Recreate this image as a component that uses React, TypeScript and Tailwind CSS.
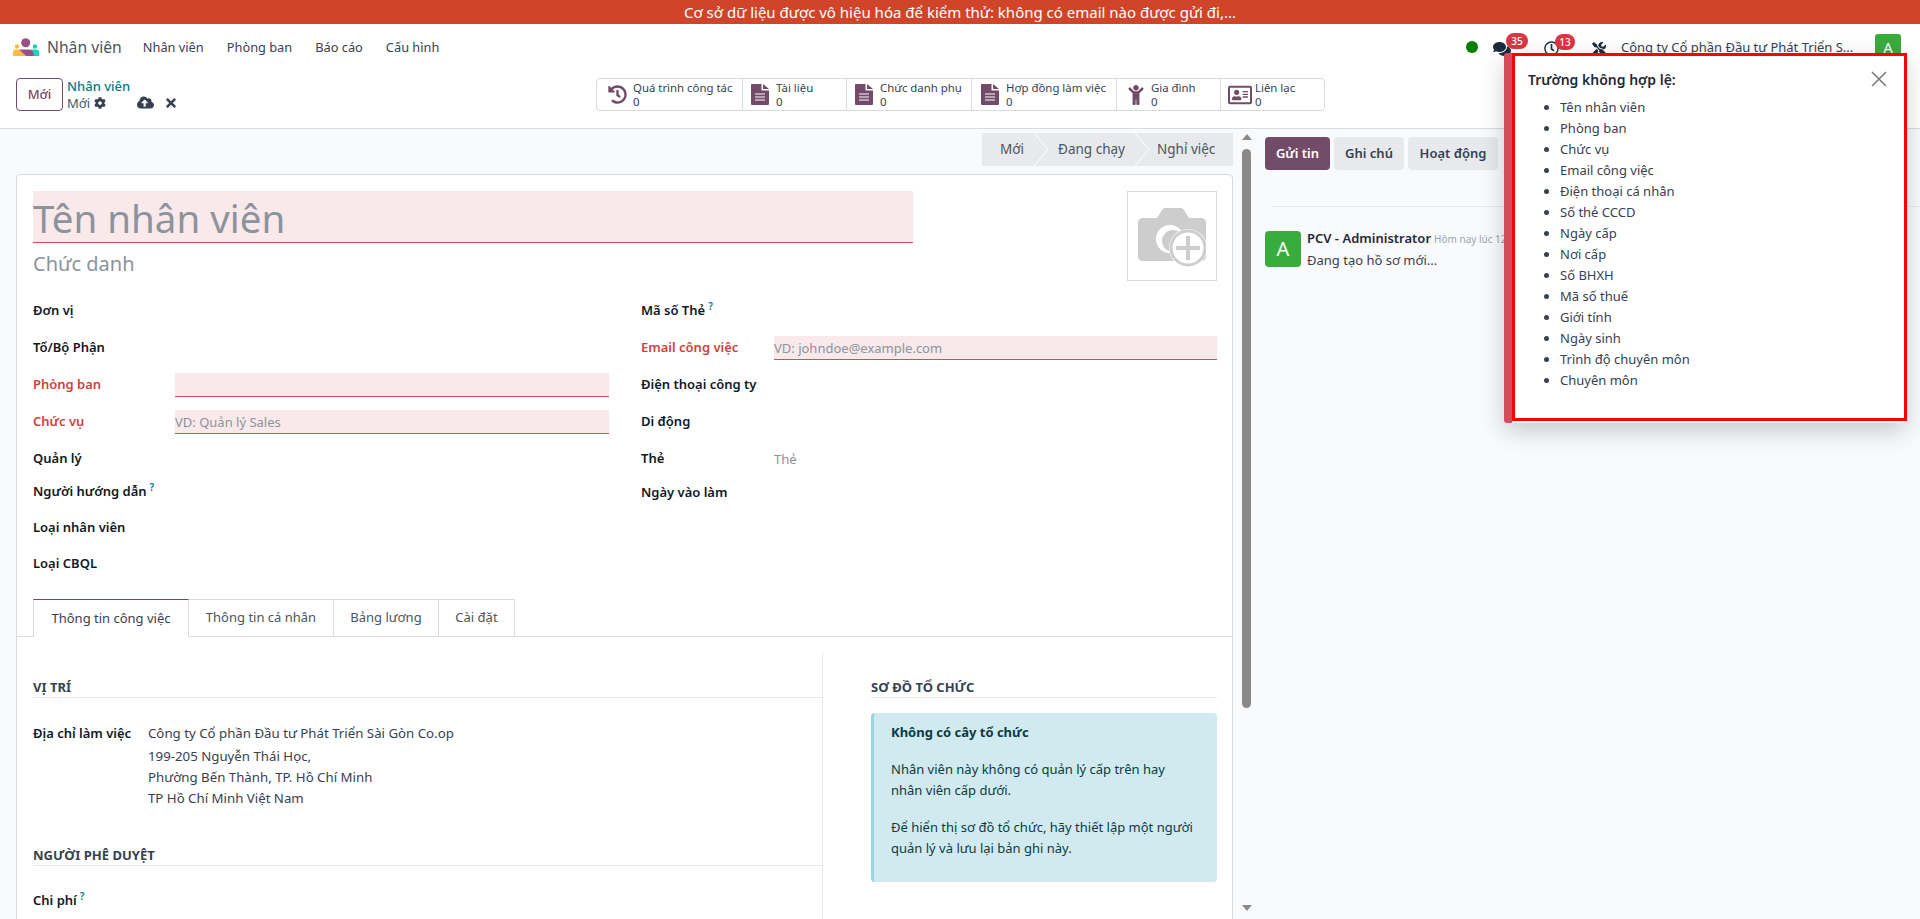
import {
  FaChild,
  FaCloudUploadAlt,
  FaCog,
  FaComments,
  FaHistory,
  FaRegAddressCard,
  FaRegClock,
  FaTimes,
  FaTools,
} from "react-icons/fa";

const invalidFields = [
  "Tên nhân viên",
  "Phòng ban",
  "Chức vụ",
  "Email công việc",
  "Điện thoại cá nhân",
  "Số thẻ CCCD",
  "Ngày cấp",
  "Nơi cấp",
  "Số BHXH",
  "Mã số thuế",
  "Giới tính",
  "Ngày sinh",
  "Trình độ chuyên môn",
  "Chuyên môn",
];

function HrLogo() {
  return (
    <svg width="26" height="18" viewBox="0 0 26 18">
      <circle cx="4" cy="8.500" r="2.200" fill="#fbb945" />
      <circle cx="22" cy="8.500" r="2.200" fill="#1ad3bb" />
      <path d="M0 18v-4q0-2.500 2.500-2.500H6L13 18z" fill="#fbb945" />
      <path d="M26 18v-4q0-2.500-2.500-2.500H18v6.500z" fill="#1ad3bb" />
      <path d="M6 11.500h10q3 0 4 3l1.500 3.500H13z" fill="#985184" />
      <circle cx="12.700" cy="4.700" r="4.500" fill="#985184" />
    </svg>
  );
}

function DocIcon() {
  return (
    <svg width="18" height="21" viewBox="0 0 18 21" className="shrink-0">
      <path d="M0 1q0-1 1-1h9.500v6.500H18V20q0 1-1 1H1q-1 0-1-1z" fill="#714b67" />
      <path d="M12 0l6 5h-6z" fill="#714b67" />
      <path d="M4 10h10M4 13h10M4 16h10" stroke="#fff" strokeWidth="1.200" />
    </svg>
  );
}

function CameraPlus() {
  return (
    <svg width="68" height="60" viewBox="0 0 68 60">
      <path
        d="M5 11h14l5-8q1-2 3-2h16q2 0 3 2l5 8h12q5 0 5 5v33q0 5-5 5H5q-5 0-5-5V16q0-5 5-5z"
        fill="#cdcdcd"
      />
      <circle cx="32" cy="32" r="14" fill="#fff" />
      <circle cx="35" cy="34" r="11" fill="#cdcdcd" />
      <circle cx="50" cy="41" r="19" fill="#fff" />
      <circle cx="50" cy="41" r="17" fill="#fff" stroke="#cdcdcd" strokeWidth="3" />
      <rect x="48" y="29" width="4" height="24" fill="#cdcdcd" />
      <rect x="38" y="39" width="24" height="4" fill="#cdcdcd" />
    </svg>
  );
}

function StatButton({
  icon,
  label,
  className,
}: {
  icon: React.ReactNode;
  label: string;
  className: string;
}) {
  return (
    <div className={`flex h-full items-center border-r border-[#d8dadd] last:border-r-0 ${className}`}>
      {icon}
      <div className="text-[11.400px] leading-[14px] text-[#374151]">
        <div className="whitespace-nowrap">{label}</div>
        <div>0</div>
      </div>
    </div>
  );
}

function Chevron() {
  return (
    <svg width="14" height="33" viewBox="0 0 14 33" className="shrink-0">
      <path d="M0 0 14 16.500 0 33" fill="none" stroke="#fff" strokeWidth="1" />
    </svg>
  );
}

function Field({
  label,
  rowClass,
  labelClass = "w-[142px]",
  required,
  help,
  children,
}: {
  label: string;
  rowClass: string;
  labelClass?: string;
  required?: boolean;
  help?: boolean;
  children?: React.ReactNode;
}) {
  return (
    <div className={`flex items-center ${rowClass}`}>
      <div
        className={`shrink-0 font-semibold whitespace-nowrap ${labelClass} ${
          required ? "text-[#d23f3a]" : "text-[#111827]"
        }`}
      >
        {label}
        {help && <sup className="ml-[3px] -top-[5px] text-[10px] font-semibold text-[#017e84]">?</sup>}
      </div>
      {children}
    </div>
  );
}

function InvalidInput({ placeholder }: { placeholder?: string }) {
  return (
    <div className="h-6 flex-1 border-b border-[#d44c59] bg-[#fae9ea] text-[13px] leading-[25px] text-[#8c939b]">
      {placeholder}
    </div>
  );
}

function SectionTitle({ children }: { children: React.ReactNode }) {
  return (
    <div className="border-b border-[#e7e9ed] text-[13px] leading-5 font-bold text-[#374151] uppercase">
      {children}
    </div>
  );
}

export default function App() {
  return (
    <div className="relative h-[919px] w-[1920px] overflow-hidden bg-white font-['Noto_Sans',sans-serif] text-[13px] text-[#374151]">
      <div className="h-6 bg-[#d0452a] text-center text-[15px] leading-6 text-white">
        Cơ sở dữ liệu được vô hiệu hóa để kiểm thử: không có email nào được gửi đi,...
      </div>

      {/* top menu */}
      <div className="flex h-[46px] items-center pl-[13px]">
        <HrLogo />
        <span className="ml-[8px] pt-[1px] text-[15.700px] text-[#4b5563]">Nhân viên</span>
        <div className="ml-[21px] flex gap-[23px] pt-[1px] text-[12.800px] text-[#374151]">
          <span>Nhân viên</span>
          <span>Phòng ban</span>
          <span>Báo cáo</span>
          <span>Cấu hình</span>
        </div>
        <div className="ml-auto flex items-center">
          <div className="h-3 w-3 rounded-full bg-[#008000]" />
          <div className="relative mt-[3px] ml-[15px] text-[#1c2b3d]">
            <FaComments size={18} />
            <span className="absolute -top-[7px] left-[13px] h-4 w-[22px] rounded-full bg-[#dc3545] text-center text-[10px] leading-4 font-medium text-white">
              35
            </span>
          </div>
          <div className="relative mt-[3px] ml-[33px] text-[#1c2b3d]">
            <FaRegClock size={15} />
            <span className="absolute -top-[7px] left-[11px] h-4 w-[20px] rounded-full bg-[#dc3545] text-center text-[10px] leading-4 font-medium text-white">
              13
            </span>
          </div>
          <FaTools size={14} className="mt-[3px] ml-[33px] text-[#1c2b3d]" />
          <span className="ml-[15px] w-[235px] pt-[1px] whitespace-nowrap text-[13px] text-[#374151]">
            Công ty Cổ phần Đầu tư Phát Triển S...
          </span>
          <div className="mr-[19px] ml-[19px] flex h-[26px] w-[26px] items-center justify-center rounded-[3px] bg-[#3aac3e] text-[15px] text-white">
            A
          </div>
        </div>
      </div>

      {/* control panel */}
      <div className="flex h-[59px] border-b border-[#d8dadd] pt-2">
        <div className="flex w-[596px] shrink-0 pl-4">
          <div className="flex h-[33px] w-[47px] items-center justify-center rounded-[4px] border border-[#714b67] font-medium text-[#714b67]">
            Mới
          </div>
          <div className="ml-[4px] leading-4">
            <div className="font-medium text-[#017e84]">Nhân viên</div>
            <div className="flex items-center gap-[4px] text-[#4b5563]">
              Mới <FaCog size={12} className="text-[#374151]" />
              <FaCloudUploadAlt size={17} className="ml-[27px] text-[#374151]" />
              <FaTimes size={14} className="ml-[6px] text-[#374151]" />
            </div>
          </div>
        </div>
        <div className="flex h-[33px] w-[729px] rounded-[4px] border border-[#d8dadd]">
          <StatButton
            className="w-[146px] gap-[6px] pl-[11px]"
            label="Quá trình công tác"
            icon={<FaHistory size={19} className="text-[#714b67]" />}
          />
          <StatButton className="w-[104px] gap-[7px] pl-2" label="Tài liệu" icon={<DocIcon />} />
          <StatButton className="w-[125px] gap-[7px] pl-2" label="Chức danh phụ" icon={<DocIcon />} />
          <StatButton className="w-[145px] gap-[7px] pl-[9px]" label="Hợp đồng làm việc" icon={<DocIcon />} />
          <StatButton
            className="w-[104px] gap-[5px] pl-[9px]"
            label="Gia đình"
            icon={<FaChild size={20} className="text-[#714b67]" />}
          />
          <StatButton
            className="flex-1 gap-[3px] pl-[7px]"
            label="Liên lạc"
            icon={<FaRegAddressCard size={24} className="text-[#714b67]" />}
          />
        </div>
      </div>

      {/* main */}
      <div className="flex h-[791px] bg-[#f9fafb]">
        <div className="w-[1240px] shrink-0 pr-[7px] pl-4">
          <div className="flex justify-end pt-[4px]">
            <div className="flex h-[33px] items-center bg-[#e7e9ed] text-[13.500px] text-[#4b5563]">
              <span className="w-[52px] pl-[18px]">Mới</span>
              <Chevron />
              <span className="w-[87px] text-center">Đang chạy</span>
              <Chevron />
              <span className="w-[84px] pl-2">Nghỉ việc</span>
            </div>
          </div>

          <div className="mt-2 h-[800px] rounded-t-[4px] border border-[#d8dadd] bg-white pt-4 pr-[15px] pl-4 text-[13px]">
            <div className="flex h-[101px] justify-between">
              <div>
                <div className="h-[52px] w-[880px] border-b border-[#d44c59] bg-[#fae9ea] text-[38.500px] leading-[54px] text-[#8c939b]">
                  Tên nhân viên
                </div>
                <div className="text-[20px] leading-[42px] text-[#8c939b]">Chức danh</div>
              </div>
              <div className="flex h-[90px] w-[90px] items-center justify-center border border-[#d8dadd] pt-[2px]">
                <CameraPlus />
              </div>
            </div>

            <div className="grid grid-cols-2 gap-x-8">
              <div>
                <Field label="Đơn vị" rowClass="h-[37px]" />
                <Field label="Tổ/Bộ Phận" rowClass="h-[37px]" />
                <Field label="Phòng ban" rowClass="h-[37px]" required>
                  <InvalidInput />
                </Field>
                <Field label="Chức vụ" rowClass="h-[37px]" required>
                  <InvalidInput placeholder="VD: Quản lý Sales" />
                </Field>
                <Field label="Quản lý" rowClass="h-[37px]" />
                <Field label="Người hướng dẫn" rowClass="h-[30px]" help />
                <Field label="Loại nhân viên" rowClass="h-[41px]" />
                <Field label="Loại CBQL" rowClass="h-[31px]" />
              </div>
              <div>
                <Field label="Mã số Thẻ" rowClass="h-[37px]" labelClass="w-[133px]" help />
                <Field label="Email công việc" rowClass="h-[37px]" labelClass="w-[133px]" required>
                  <InvalidInput placeholder="VD: johndoe@example.com" />
                </Field>
                <Field label="Điện thoại công ty" rowClass="h-[37px]" labelClass="w-[133px]" />
                <Field label="Di động" rowClass="h-[37px]" labelClass="w-[133px]" />
                <Field label="Thẻ" rowClass="h-[37px]" labelClass="w-[133px]">
                  <span className="pt-[2px] text-[#8c939b]">Thẻ</span>
                </Field>
                <Field label="Ngày vào làm" rowClass="h-[32px]" labelClass="w-[133px]" />
              </div>
            </div>

            {/* tabs */}
            <div className="mt-5 -mr-[15px] -ml-4 flex h-[38px] border-b border-[#d8dadd] pl-4 text-[#4b5563]">
              <div className="-mb-px flex w-[156px] items-center justify-center border-x border-t border-x-[#d8dadd] border-t-[#714b67] bg-white text-[#374151]">
                Thông tin công việc
              </div>
              <div className="flex w-[145px] items-center justify-center border-t border-r border-[#d8dadd]">
                Thông tin cá nhân
              </div>
              <div className="flex w-[105px] items-center justify-center border-t border-r border-[#d8dadd]">
                Bảng lương
              </div>
              <div className="flex w-[76px] items-center justify-center border-t border-r border-[#d8dadd]">
                Cài đặt
              </div>
            </div>

            <div className="-ml-4 flex">
              <div className="mt-[16px] h-[400px] w-[806px] shrink-0 border-r border-[#e7e9ed] pt-[24px] pl-4">
                <SectionTitle>Vị trí</SectionTitle>
                <div className="mt-[24px] flex">
                  <div className="w-[115px] shrink-0 leading-[23px] font-semibold text-[#111827]">
                    Địa chỉ làm việc
                  </div>
                  <div className="text-[13.250px] leading-[21px] text-[#374151]">
                    <div className="leading-[23px]">Công ty Cổ phần Đầu tư Phát Triển Sài Gòn Co.op</div>
                    <div className="leading-[22px]">199-205 Nguyễn Thái Học,</div>
                    <div>Phường Bến Thành, TP. Hồ Chí Minh</div>
                    <div>TP Hồ Chí Minh Việt Nam</div>
                  </div>
                </div>
                <div className="mt-[36px]">
                  <SectionTitle>Người phê duyệt</SectionTitle>
                </div>
                <Field label="Chi phí" rowClass="mt-[24px] h-[22px]" help />
              </div>
              <div className="ml-[48px] w-[346px] pt-[40px]">
                <SectionTitle>Sơ đồ tổ chức</SectionTitle>
                <div className="mt-[15px] h-[169px] rounded-[4px] border-l-[3px] border-[#99d5e0] bg-[#d0eaef] pt-[9px] pr-5 pl-[17px] leading-[21px] text-[#0e3a42]">
                  <div className="font-bold">Không có cây tổ chức</div>
                  <p className="mt-[16px]">Nhân viên này không có quản lý cấp trên hay nhân viên cấp dưới.</p>
                  <p className="mt-[16px]">Để hiển thị sơ đồ tổ chức, hãy thiết lập một người quản lý và lưu lại bản ghi này.</p>
                </div>
              </div>
            </div>
          </div>
        </div>

        {/* form scrollbar */}
        <div className="flex w-[18px] shrink-0 flex-col items-center pt-[5px] pr-[5px]">
          <div className="h-0 w-0 border-x-[5px] border-b-[6px] border-x-transparent border-b-[#8a8a8a]" />
          <div className="mt-[9px] h-[559px] w-[9px] rounded-full bg-[#8a8a8a]" />
          <div className="mt-[197px] h-0 w-0 border-x-[5px] border-t-[6px] border-x-transparent border-t-[#8a8a8a]" />
        </div>

        {/* chatter */}
        <div className="flex-1 pt-2 pl-[7px]">
          <div className="flex gap-1 text-[13px]">
            <div className="flex h-[33px] w-[65px] items-center justify-center rounded-[4px] bg-[#714b67] font-semibold text-white">
              Gửi tin
            </div>
            <div className="flex h-[33px] w-[70px] items-center justify-center rounded-[4px] bg-[#e7e9ed] font-semibold text-[#374151]">
              Ghi chú
            </div>
            <div className="flex h-[33px] w-[90px] items-center justify-center rounded-[4px] bg-[#e7e9ed] font-semibold text-[#374151]">
              Hoạt động
            </div>
          </div>
          <div className="mt-[36px] ml-2 border-t border-[#e7e9ed]" />
          <div className="mt-6 flex">
            <div className="flex h-9 w-9 shrink-0 items-center justify-center rounded-[4px] bg-[#3aac3e] text-[20px] text-white">
              A
            </div>
            <div className="ml-[6px]">
              <div className="flex h-[16px] items-center whitespace-nowrap">
                <span className="font-semibold text-[#1f2937]">PCV - Administrator</span>
                <span className="ml-[3px] text-[10px] text-[#9ca3af]">Hôm nay lúc 12</span>
              </div>
              <div className="mt-[3px] leading-[20px]">Đang tạo hồ sơ mới...</div>
            </div>
          </div>
        </div>
      </div>

      {/* invalid fields notification */}
      <div className="absolute top-[53px] left-[1504px] h-[370px] w-[402px] rounded-[3px] border-l-[8px] border-[#d44c59] shadow-[0_8px_24px_rgba(0,0,0,0.2)]">
        <div className="relative h-[368px] w-[395px] border-[3px] border-[#ff0000] bg-white pt-[14px] pl-[13px]">
          <div className="text-[14px] leading-5 font-semibold text-[#1f2937]">Trường không hợp lệ:</div>
          <button className="absolute top-[15px] right-[17px] text-[#777]">
            <svg width="16" height="16" viewBox="0 0 16 16">
              <path d="M1 1 15 15M15 1 1 15" stroke="currentColor" strokeWidth="1.500" fill="none" />
            </svg>
          </button>
          <ul className="mt-[7px] list-disc pl-8 text-[13px] leading-[21px] text-[#374151] marker:text-[#374151]">
            {invalidFields.map((f) => (
              <li key={f}>{f}</li>
            ))}
          </ul>
        </div>
      </div>
    </div>
  );
}
